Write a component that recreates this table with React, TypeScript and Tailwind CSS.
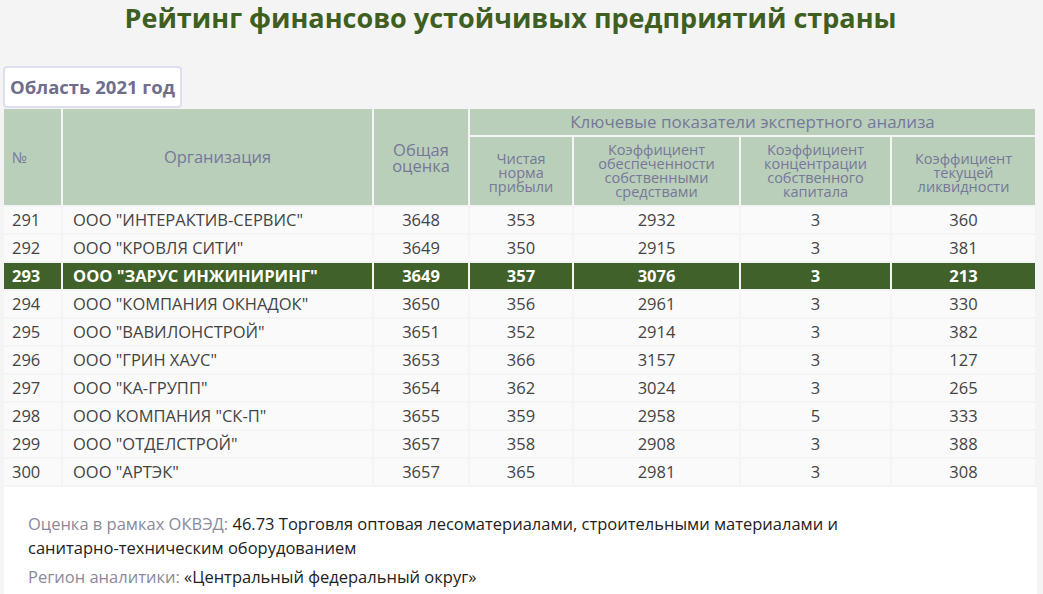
import React from 'react';

type Row = {
    n: number;
    name: string;
    total: number;
    profit: number;
    equity: number;
    concentration: number;
    liquidity: number;
    current?: boolean;
};

const rows: Row[] = [
    { n: 291, name: 'ООО "ИНТЕРАКТИВ-СЕРВИС"', total: 3648, profit: 353, equity: 2932, concentration: 3, liquidity: 360 },
    { n: 292, name: 'ООО "КРОВЛЯ СИТИ"', total: 3649, profit: 350, equity: 2915, concentration: 3, liquidity: 381 },
    { n: 293, name: 'ООО "ЗАРУС ИНЖИНИРИНГ"', total: 3649, profit: 357, equity: 3076, concentration: 3, liquidity: 213, current: true },
    { n: 294, name: 'ООО "КОМПАНИЯ ОКНАДОК"', total: 3650, profit: 356, equity: 2961, concentration: 3, liquidity: 330 },
    { n: 295, name: 'ООО "ВАВИЛОНСТРОЙ"', total: 3651, profit: 352, equity: 2914, concentration: 3, liquidity: 382 },
    { n: 296, name: 'ООО "ГРИН ХАУС"', total: 3653, profit: 366, equity: 3157, concentration: 3, liquidity: 127 },
    { n: 297, name: 'ООО "КА-ГРУПП"', total: 3654, profit: 362, equity: 3024, concentration: 3, liquidity: 265 },
    { n: 298, name: 'ООО КОМПАНИЯ "СК-П"', total: 3655, profit: 359, equity: 2958, concentration: 5, liquidity: 333 },
    { n: 299, name: 'ООО "ОТДЕЛСТРОЙ"', total: 3657, profit: 358, equity: 2908, concentration: 3, liquidity: 388 },
    { n: 300, name: 'ООО "АРТЭК"', total: 3657, profit: 365, equity: 2981, concentration: 3, liquidity: 308 },
];

const App = () => {
    return (
        <div className="min-h-screen bg-[#f4f4f4] font-['Open_Sans',sans-serif] text-[#444]">
            <h1 className="pr-[22px] text-center text-[27px] font-bold leading-[36px] text-[#3f5f22]">
                Рейтинг финансово устойчивых предприятий страны
            </h1>

            <div className="mt-[30px] pl-[3px]">
                <div className="inline-block rounded-[4px] border-2 border-[#dcdff0] bg-white px-[5px] py-[5px] text-[18.5px] font-bold leading-[28px] text-[#6f6f8c]">
                    Область 2021 год
                </div>
            </div>

            <table className="-mt-[1px] ml-[2px] w-[1035px] table-fixed border-separate border-spacing-[2px] text-[16.5px]">
                <colgroup>
                    <col className="w-[57px]" />
                    <col className="w-[309px]" />
                    <col className="w-[94px]" />
                    <col className="w-[102px]" />
                    <col className="w-[165px]" />
                    <col className="w-[149px]" />
                    <col className="w-[143px]" />
                </colgroup>
                <thead className="text-[#77779a]">
                    <tr>
                        <th rowSpan={2} className="bg-[#b9cfb9] pl-[8px] text-left text-[15px] font-normal">№</th>
                        <th rowSpan={2} className="bg-[#b9cfb9] text-center text-[16.5px] font-normal">Организация</th>
                        <th rowSpan={2} className="bg-[#b9cfb9] pt-[2px] text-center text-[16.5px] font-normal leading-[16px]">
                            Общая<br />оценка
                        </th>
                        <th colSpan={4} className="h-[26px] bg-[#b9cfb9] text-center text-[17px] font-normal leading-[20px]">
                            Ключевые показатели экспертного анализа
                        </th>
                    </tr>
                    <tr className="text-[14.5px] leading-[14px]">
                        <th className="h-[68px] bg-[#b9cfb9] pt-[3px] font-normal">Чистая<br />норма<br />прибыли</th>
                        <th className="bg-[#b9cfb9] font-normal">Коэффициент<br />обеспеченности<br />собственными<br />средствами</th>
                        <th className="bg-[#b9cfb9] font-normal">Коэффициент<br />концентрации<br />собственного<br />капитала</th>
                        <th className="bg-[#b9cfb9] pt-[3px] font-normal">Коэффициент<br />текущей<br />ликвидности</th>
                    </tr>
                </thead>
                <tbody>
                    {rows.map((row) => {
                        const cell = row.current
                            ? 'h-[26px] bg-[#41612a] font-bold text-white'
                            : 'h-[26px] bg-[#fafafa]';
                        return (
                            <tr key={row.n}>
                                <td className={`${cell} pl-[8px]`}>{row.n}</td>
                                <td className={`${cell} pl-[10px]`}>{row.name}</td>
                                <td className={`${cell} text-center`}>{row.total}</td>
                                <td className={`${cell} text-center`}>{row.profit}</td>
                                <td className={`${cell} text-center`}>{row.equity}</td>
                                <td className={`${cell} text-center`}>{row.concentration}</td>
                                <td className={`${cell} text-center`}>{row.liquidity}</td>
                            </tr>
                        );
                    })}
                </tbody>
            </table>

            <div className="ml-[4px] mr-[6px] bg-white px-[24px] pb-[20px] pt-[25px] text-[16.5px] leading-[24px] text-[#222]">
                <p>
                    <span className="text-[#8a8a9a]">Оценка в рамках ОКВЭД: </span>
                    46.73 Торговля оптовая лесоматериалами, строительными материалами и
                    <br />
                    санитарно-техническим оборудованием
                </p>
                <p className="mt-[5px]">
                    <span className="text-[#8a8a9a]">Регион аналитики: </span>
                    «Центральный федеральный округ»
                </p>
            </div>
        </div>
    );
};

export default App;
